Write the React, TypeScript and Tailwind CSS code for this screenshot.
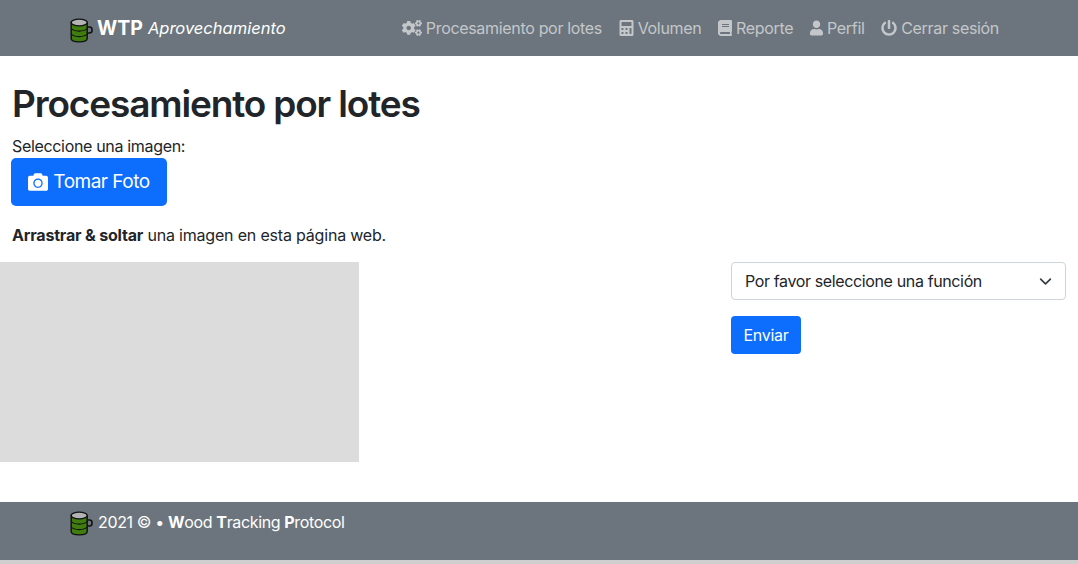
import { FaBook, FaCalculator, FaCamera, FaCogs, FaPowerOff, FaUser } from "react-icons/fa";

function Logo({ className }: { className?: string }) {
  return (
    <svg width="23" height="25" viewBox="0 0 23 25" className={"shrink-0 " + className}>
      <path d="M17 9h2.500a2.500 2.500 0 0 1 2.500 2.500v1a2.500 2.500 0 0 1-2.500 2.500H17" fill="none" stroke="#111" strokeWidth="1.6" />
      <path d="M1.200 4.500v16c0 2 3.600 3.400 8 3.400s8-1.400 8-3.400v-16z" fill="#3f7d0e" stroke="#111" strokeWidth="1.4" />
      <ellipse cx="9.200" cy="4.500" rx="8" ry="3.400" fill="#b4b4b4" stroke="#111" strokeWidth="1.4" />
      <path d="M1.200 10.500c1.500 1.800 4.500 2.600 8 2.600s6.500-.8 8-2.600M1.200 16c1.500 1.800 4.500 2.600 8 2.600s6.500-.8 8-2.600" fill="none" stroke="#111" strokeWidth="1.1" />
    </svg>
  );
}

const links = [
  { label: "Procesamiento por lotes", icon: <FaCogs className="w-[20px] h-[16px]" /> },
  { label: "Volumen", icon: <FaCalculator className="w-[15px] h-[16px]" /> },
  { label: "Reporte", icon: <FaBook className="w-[14px] h-[16px]" /> },
  { label: "Perfil", icon: <FaUser className="w-[13px] h-[16px]" /> },
  { label: "Cerrar sesión", icon: <FaPowerOff className="w-[16px] h-[16px]" /> },
];

export default function App() {
  return (
    <div className="min-h-[564px] bg-[#cfcfcf] text-[#212529] font-['Inter',sans-serif] text-[16px]">
      <nav className="h-[56px] bg-[#6c757d] flex items-center pl-[70px] pr-[79px] justify-between">
        <div className="flex items-center">
          <Logo className="mt-[4px]" />
          <span className="ml-[4px] text-white text-[19.500px] leading-[28px] font-bold">WTP</span>
          <span className="ml-[5px] text-white text-[16.500px] leading-[28px] italic">Aprovechamiento</span>
        </div>
        <div className="flex items-center gap-[16.700px] text-[16px] text-[#c4c7ca]">
          {links.map((l) => (
            <a key={l.label} className="flex items-center gap-[4px] whitespace-nowrap tracking-[-0.32px]">
              {l.icon}
              {l.label}
            </a>
          ))}
        </div>
      </nav>

      <main className="bg-white h-[446px] pt-[24px]">
        <h1 className="ml-[12px] text-[37px] leading-[48px] font-semibold tracking-[-1.15px]">Procesamiento por lotes</h1>
        <p className="ml-[12px] mt-[6px] leading-[24px] tracking-[-0.33px]">Seleccione una imagen:</p>
        <button className="ml-[11px] h-[48px] w-[156px] rounded-[5px] bg-[#0d6efd] text-white text-[19px] flex items-center justify-center gap-[5px] tracking-[-0.5px]">
          <FaCamera className="w-[20px] h-[20px]" />
          Tomar Foto
        </button>
        <p className="ml-[12px] mt-[17px] leading-[24px] tracking-[-0.19px]">
          <b className="font-bold">Arrastrar &amp; soltar</b> una imagen en esta página web.
        </p>
        <div className="mt-[15px] flex justify-between pr-[12px]">
          <div className="w-[359px] h-[200px] bg-[#dcdcdc]" />
          <div className="w-[335px]">
            <div className="h-[38px] rounded-[4px] border border-[#ced4da] flex items-center justify-between pl-[13px] pr-[13px]">
              <span className="tracking-[-0.37px]">Por favor seleccione una función</span>
              <svg width="16" height="16" viewBox="0 0 16 16" fill="none" stroke="#343a40" strokeWidth="2" strokeLinecap="round" strokeLinejoin="round" className="w-[13px] h-[13px]">
                <path d="M2 5l6 6 6-6" />
              </svg>
            </div>
            <button className="mt-[16px] h-[38px] w-[70px] rounded-[4px] bg-[#0d6efd] text-white tracking-[-0.3px]">Enviar</button>
          </div>
        </div>
      </main>

      <footer className="h-[58px] bg-[#6c757d] flex items-start pl-[70px] pt-[9px] text-white">
        <Logo />
        <span className="ml-[5px] -mt-[1px] leading-[24px] tracking-[-0.36px]">
          2021 © • <b>W</b>ood <b>T</b>racking <b>P</b>rotocol
        </span>
      </footer>
    </div>
  );
}
